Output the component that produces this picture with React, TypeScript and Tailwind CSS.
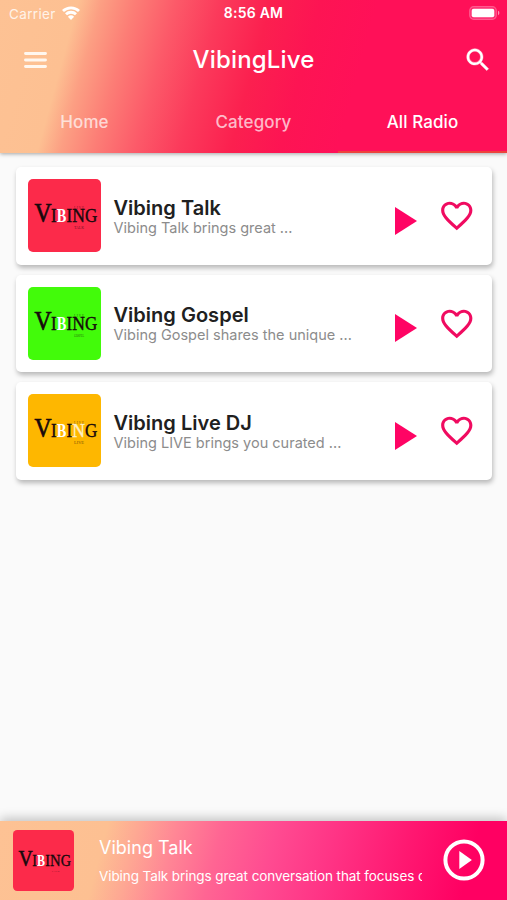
import React from "react";

type Station = {
  name: string;
  summary: string;
  color: string;
  tag: string;
  lightN?: boolean;
};

const stations: Station[] = [
  { name: "Vibing Talk", summary: "Vibing Talk brings great ...", color: "#fc2a4a", tag: "TALK" },
  { name: "Vibing Gospel", summary: "Vibing Gospel shares the unique ...", color: "#42fb0a", tag: "GOSPEL" },
  { name: "Vibing Live DJ", summary: "Vibing LIVE brings you curated ...", color: "#feb700", tag: "LIVE", lightN: true },
];

function Artwork({ station, className }: { station: Station; className: string }) {
  const nColor = station.lightN ? "#fff0c8" : "#17090c";
  return (
    <svg viewBox="0 0 73 73" className={className} fontFamily="'Liberation Serif', serif" fill="#17090c">
      <rect width="73" height="73" rx="5" fill={station.color} />
      <text x="6.5" y="43" fontSize="27" textLength="17" lengthAdjust="spacingAndGlyphs" stroke="#17090c" strokeWidth=".7">V</text>
      <g fontSize="19.5" strokeWidth=".4">
        <text x="22.9" y="43" textLength="5.6" lengthAdjust="spacingAndGlyphs" stroke="#17090c">I</text>
        <text x="28.8" y="43" textLength="9.6" lengthAdjust="spacingAndGlyphs" fill="#fff" fontWeight="700">B</text>
        <text x="38.5" y="43" textLength="5.6" lengthAdjust="spacingAndGlyphs" stroke="#17090c">I</text>
        <text x="44.2" y="43" textLength="12.7" lengthAdjust="spacingAndGlyphs" fill={nColor} stroke={nColor}>N</text>
        <text x="57" y="43" textLength="12.3" lengthAdjust="spacingAndGlyphs" stroke="#17090c">G</text>
      </g>
      <g fontSize="3.2" opacity=".6">
        <text x="46" y="29.8" textLength="10">LIVE</text>
        <text x="46" y="49.7" textLength="10" lengthAdjust="spacingAndGlyphs">{station.tag}</text>
      </g>
    </svg>
  );
}

function StationCard({ station }: { station: Station }) {
  return (
    <li className="flex h-[97.5px] items-center rounded-[5px] bg-white pl-[12.5px] shadow-[1px_3px_5px_rgba(0,0,0,0.27)]">
      <Artwork station={station} className="h-[73px] w-[73px] shrink-0" />
      <div className="ml-[12.5px] w-[270px] whitespace-nowrap pt-px">
        <h2 className="text-[20px] font-semibold leading-[22px] tracking-[0.02px] text-[#202020]">{station.name}</h2>
        <p className="text-[14.5px] leading-[17px] text-[#8c8c8c]">{station.summary}</p>
      </div>
      <button aria-label="Play" className="ml-[11px] mt-[10px]">
        <svg viewBox="0 0 22 28" className="h-7 w-[22px]" fill="#ff0464"><path d="M0 0v28l22-14z" /></svg>
      </button>
      <button aria-label="Favourite" className="ml-[21.5px]">
        <svg viewBox="0 0 24 24" className="h-[37.5px] w-[37.5px]" fill="#f00b60">
          <path d="M16.5 3c-1.74 0-3.41.81-4.5 2.09C10.91 3.81 9.24 3 7.5 3 4.42 3 2 5.42 2 8.5c0 3.78 3.4 6.86 8.55 11.54L12 21.35l1.45-1.32C18.6 15.36 22 12.28 22 8.5 22 5.42 19.58 3 16.5 3zm-4.4 15.55l-.1.1-.1-.1C7.14 14.24 4 11.39 4 8.5 4 6.5 5.5 5 7.5 5c1.54 0 3.04.99 3.57 2.36h1.87C13.46 5.99 14.96 5 16.5 5c2 0 3.5 1.5 3.5 3.5 0 2.89-3.14 5.74-7.9 10.05z" />
        </svg>
      </button>
    </li>
  );
}

function StatusBar() {
  return (
    <div className="grid h-7 grid-cols-3 items-center px-[9px] text-white">
      <div className="flex items-center gap-[6px] text-[13.5px] tracking-[0.35px] text-[#fff3e9]">
        <span>Carrier</span>
        <svg viewBox="0 0 18 14" className="mb-0.5 h-[14px] w-[18px]" fill="none" stroke="#fff" strokeWidth="2.8">
          <path d="M1 5.1a11.4 11.4 0 0 1 16 0M4 8.3a7.1 7.1 0 0 1 10 0" />
          <path d="M9 14l-3.1-3.2a4.5 4.5 0 0 1 6.2 0z" fill="#fff" stroke="none" />
        </svg>
      </div>
      <span className="pb-0.5 text-center text-[14px] font-semibold leading-5 tracking-[0.25px]">8:56 AM</span>
      <svg viewBox="0 0 31 14" className="-mr-0.5 mb-0.5 h-[14px] w-[31px] justify-self-end">
        <rect x=".7" y=".7" width="26.6" height="12.6" rx="4" fill="#ff2b70" stroke="#ff5a8e" strokeWidth="1.2" />
        <rect x="2.7" y="2.7" width="22.6" height="8.6" rx="2" fill="#fff" />
        <path d="M29 4.8v4.4q1.4-.6 1.4-2.2T29 4.8" fill="#ff91b5" />
      </svg>
    </div>
  );
}

export default function App() {
  return (
    <div className="flex h-[900px] w-[507px] flex-col overflow-hidden bg-[#fafafa] font-['Inter','Liberation_Sans',sans-serif]">
      <header className="z-10 h-[152.5px] shrink-0 bg-[linear-gradient(105.4deg,#fdc294_0px,#fdc092_76px,#fc9f83_98px,#fc7e76_130px,#fc5a69_170px,#fb3a5b_213px,#fb204f_262px,#fd1453_310px,#ff1058_365px,#ff1058_100%)] shadow-[0_1px_4px_rgba(0,0,0,0.35)]">
        <StatusBar />
        <div className="grid h-[63px] grid-cols-[1fr_auto_1fr] items-center px-[18px] text-white">
          <svg viewBox="0 0 23 16" className="ml-[6px] h-4 w-[23px]" stroke="#fff7ef" strokeWidth="2.9" strokeLinecap="round"><path d="M1.5 1.5h20M1.5 8h20M1.5 14.5h20" /></svg>
          <h1 className="text-[24px] font-medium leading-8 tracking-[0.15px]">VibingLive</h1>
          <svg viewBox="0 0 24 24" className="-mr-[3.5px] h-[30px] w-[30px] justify-self-end" fill="currentColor" stroke="currentColor" strokeWidth=".3"><path d="M15.5 14h-.79l-.28-.27C15.41 12.59 16 11.11 16 9.5 16 5.91 13.09 3 9.5 3S3 5.91 3 9.5 5.91 16 9.5 16c1.61 0 3.09-.59 4.23-1.57l.27.28v.79l5 4.99L20.49 19l-4.99-5zm-6 0C7.01 14 5 11.99 5 9.5S7.01 5 9.5 5 14 7.01 14 9.5 11.99 14 9.5 14z" /></svg>
        </div>
        <nav className="grid h-[61.5px] grid-cols-3 text-center text-[17px] font-medium leading-[62px] tracking-[0.1px]">
          <a className="text-white/70">Home</a>
          <a className="text-white/70">Category</a>
          <a className="h-[61.5px] border-b-2 border-[#ed423c] text-white">All Radio</a>
        </nav>
      </header>

      <main className="flex-1 px-[15.5px] pt-[14.5px]">
        <ul className="flex flex-col gap-[10px]">
          {stations.map((station) => <StationCard key={station.name} station={station} />)}
        </ul>
      </main>

      <footer className="flex h-[79.5px] shrink-0 items-center bg-[linear-gradient(105deg,#fdc294_0px,#fdc092_105px,#fea893_135px,#ff8795_172px,#ff6593_217px,#ff4b91_270px,#ff3586_325px,#ff1871_400px,#ff0062_465px,#ff0062_100%)] pl-[13px] text-white shadow-[0_-3px_10px_rgba(0,0,0,0.22)]">
        <Artwork station={stations[0]} className="h-[61px] w-[61px] shrink-0" />
        <div className="ml-[25px] w-[323px] overflow-hidden whitespace-nowrap pt-[2px]">
          <h3 className="text-[18px] leading-[24px] tracking-[0.02px]">Vibing Talk</h3>
          <p className="mt-[6px] text-[13.5px] leading-[20px] tracking-[-0.09px]">Vibing Talk brings great conversation that focuses on</p>
        </div>
        <button aria-label="Play current station" className="ml-[21px]">
          <svg viewBox="0 0 42 42" className="h-[42px] w-[42px]"><circle cx="21" cy="21" r="18.6" fill="none" stroke="#fff" strokeWidth="4" /><path d="M16.3 12v18l12.6-9z" fill="#fff" /></svg>
        </button>
      </footer>
    </div>
  );
}
